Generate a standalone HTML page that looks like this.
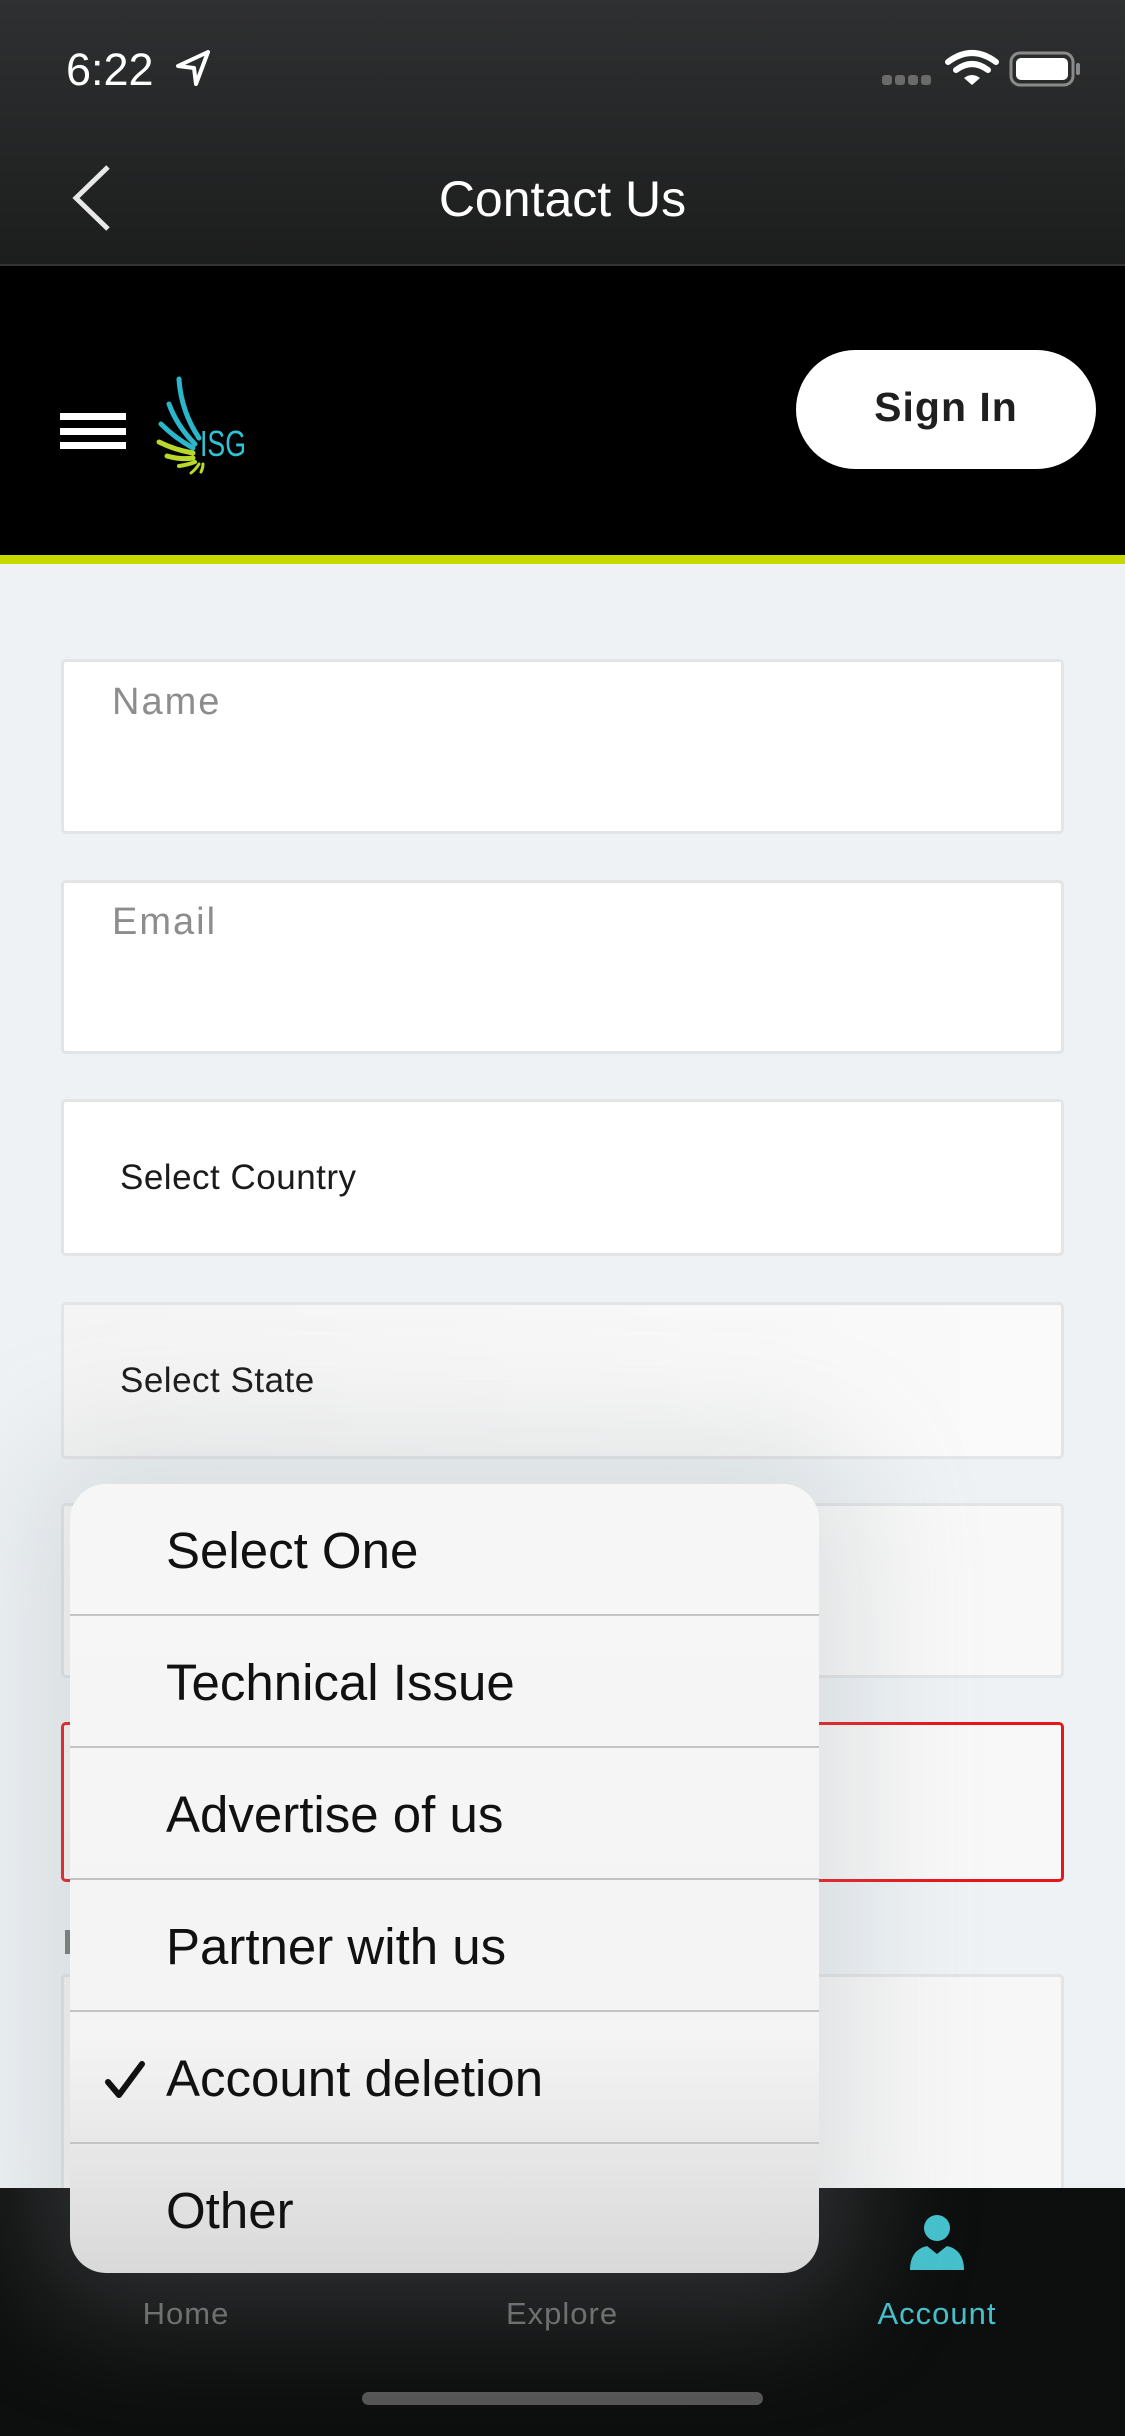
<!DOCTYPE html>
<html><head><meta charset="utf-8"><style>
*{margin:0;padding:0;box-sizing:border-box}
body{width:1125px;height:2436px;overflow:hidden;position:relative;background:#eef2f5;font-family:"Liberation Sans",sans-serif}
.abs{position:absolute}
.hdr{left:0;top:0;width:1125px;height:266px;background:linear-gradient(#2f3031,#1c1d1d);border-bottom:2px solid #333}
.band{left:0;top:266px;width:1125px;height:289px;background:#000}
.lime{left:0;top:555px;width:1125px;height:9px;background:#c5d800}
.field{left:61px;width:1003px;background:#fff;border:3px solid #e2e4e6;border-radius:5px}
.lbl{position:absolute;left:48px;color:#8d8d8d;font-size:38px;letter-spacing:2px}
.sel{position:absolute;left:56px;color:#1b1b1b;font-size:35px;letter-spacing:0.5px}
.pop{left:70px;top:1484px;width:749px;height:789px;border-radius:36px;background:linear-gradient(#f6f6f6 0%,#f4f4f4 70%,#d9d9d9 100%);box-shadow:0 0 120px 40px rgba(150,160,165,.25);overflow:hidden}
.row{position:absolute;left:0;width:749px;height:132px;border-bottom:2px solid #c4c4c4}
.row span{position:absolute;left:96px;top:37px;font-size:51px;color:#111}
.tab{left:0;top:2188px;width:1125px;height:248px;background:#0d0e0e}
.tl{position:absolute;top:2296px;font-size:31px;color:#6a6a6a;letter-spacing:1px;transform:translateX(-50%)}
</style></head><body>
<div class="abs hdr"></div>
<div class="abs" style="left:66px;top:44px;color:#fff;font-size:45px;">6:22</div>
<svg class="abs" style="left:174px;top:48px" width="40" height="40" viewBox="0 0 40 40"><path d="M34 4 L4 18 L20 20 L22 36 Z" fill="none" stroke="#fff" stroke-width="4" stroke-linejoin="round"/></svg>
<svg class="abs" style="left:880px;top:48px" width="210" height="42" viewBox="0 0 210 42">
<g fill="#6a6a6a"><rect x="2" y="27" width="10" height="10" rx="3"/><rect x="15" y="27" width="10" height="10" rx="3"/><rect x="28" y="27" width="10" height="10" rx="3"/><rect x="41" y="27" width="10" height="10" rx="3"/></g>
<path d="M68 14 Q92 -4 116 14" stroke="#fff" stroke-width="6" fill="none" stroke-linecap="round"/>
<path d="M76 22 Q92 10 108 22" stroke="#fff" stroke-width="6" fill="none" stroke-linecap="round"/>
<path d="M84 30 L92 37 L100 30 Q92 24 84 30Z" fill="#fff"/>
<rect x="131" y="5" width="62" height="32" rx="9" fill="none" stroke="#8a8a8a" stroke-width="3"/>
<rect x="136" y="10" width="52" height="22" rx="5" fill="#fff"/>
<rect x="196" y="15" width="4" height="12" rx="2" fill="#8a8a8a"/>
</svg>
<svg class="abs" style="left:68px;top:162px" width="50" height="70" viewBox="0 0 50 70"><path d="M40 5 L8 36 L40 67" stroke="#e8e8e8" stroke-width="5" fill="none"/></svg>
<div class="abs" style="left:0;width:1125px;top:170px;text-align:center;color:#fff;font-size:50px;">Contact Us</div>
<div class="abs band"></div>
<div class="abs lime"></div>
<div class="abs" style="left:60px;top:413px;width:66px;height:7px;background:#fff"></div>
<div class="abs" style="left:60px;top:428px;width:66px;height:7px;background:#fff"></div>
<div class="abs" style="left:60px;top:442px;width:66px;height:7px;background:#fff"></div>
<svg class="abs" style="left:155px;top:376px" width="100" height="100" viewBox="0 0 100 100">
<g fill="none" stroke-linecap="round">
<path d="M24 3 Q26 35 44 62" stroke="#2ab7cc" stroke-width="5"/>
<path d="M14 28 Q22 50 40 68" stroke="#2ab7cc" stroke-width="5"/>
<path d="M6 48 Q20 62 38 72" stroke="#2ab7cc" stroke-width="5"/>
<path d="M4 66 Q20 74 38 77" stroke="#b8d82a" stroke-width="5"/>
<path d="M12 80 Q26 84 38 82" stroke="#b8d82a" stroke-width="5"/>
<path d="M24 90 Q32 89 40 86" stroke="#b8d82a" stroke-width="4"/>
<path d="M36 97 Q41 93 44 88" stroke="#b8d82a" stroke-width="3"/>
<path d="M46 96 Q48 92 48 88" stroke="#b8d82a" stroke-width="3"/>
</g>
<text x="45" y="80" font-family="Liberation Sans" font-size="36" fill="#2ec4d4" textLength="46" lengthAdjust="spacingAndGlyphs">ISG</text>
</svg>
<div class="abs" style="left:796px;top:350px;width:300px;height:119px;background:#fff;border-radius:60px;text-align:center;line-height:114px;font-size:41px;font-weight:bold;color:#1f1f1f;letter-spacing:1px">Sign In</div>

<div class="abs field" style="top:659px;height:175px"><span class="lbl" style="top:19px">Name</span></div>
<div class="abs field" style="top:880px;height:174px"><span class="lbl" style="top:18px">Email</span></div>
<div class="abs field" style="top:1099px;height:157px"><span class="sel" style="top:56px">Select Country</span></div>
<div class="abs field" style="top:1302px;height:157px;background:linear-gradient(90deg,#f4f4f4,#fafafa)"><span class="sel" style="top:56px">Select State</span></div>
<div class="abs field" style="top:1503px;height:175px;background:#f8f8f8"></div>
<div class="abs field" style="top:1722px;height:160px;border-color:#e8161b;background:#f8f8f8"></div>
<div class="abs" style="left:65px;top:1930px;width:5px;height:24px;background:#777"></div>
<div class="abs field" style="top:1974px;height:260px;background:#f7f7f7"></div>

<div class="abs tab"></div>
<div class="tl" style="left:186px">Home</div>
<div class="tl" style="left:562px">Explore</div>
<div class="tl" style="left:937px;color:#45c1cc">Account</div>
<svg class="abs" style="left:907px;top:2212px" width="60" height="62" viewBox="0 0 60 62"><circle cx="30" cy="16" r="13" fill="#45c1cc"/><path d="M3 58 Q3 38 20 34 L30 42 L40 34 Q57 38 57 58 Z" fill="#45c1cc"/></svg>
<div class="abs" style="left:362px;top:2392px;width:401px;height:13px;border-radius:7px;background:#555"></div>

<div class="abs pop">
<div class="row" style="top:0"><span>Select One</span></div>
<div class="row" style="top:132px"><span>Technical Issue</span></div>
<div class="row" style="top:264px"><span>Advertise of us</span></div>
<div class="row" style="top:396px"><span>Partner with us</span></div>
<div class="row" style="top:528px"><span>Account deletion</span>
<svg style="position:absolute;left:34px;top:48px" width="44" height="40" viewBox="0 0 44 40"><path d="M4 22 L15 35 L38 4" stroke="#111" stroke-width="6" fill="none" stroke-linecap="round" stroke-linejoin="round"/></svg></div>
<div class="row" style="top:660px;border:none"><span>Other</span></div>
</div>
</body></html>
